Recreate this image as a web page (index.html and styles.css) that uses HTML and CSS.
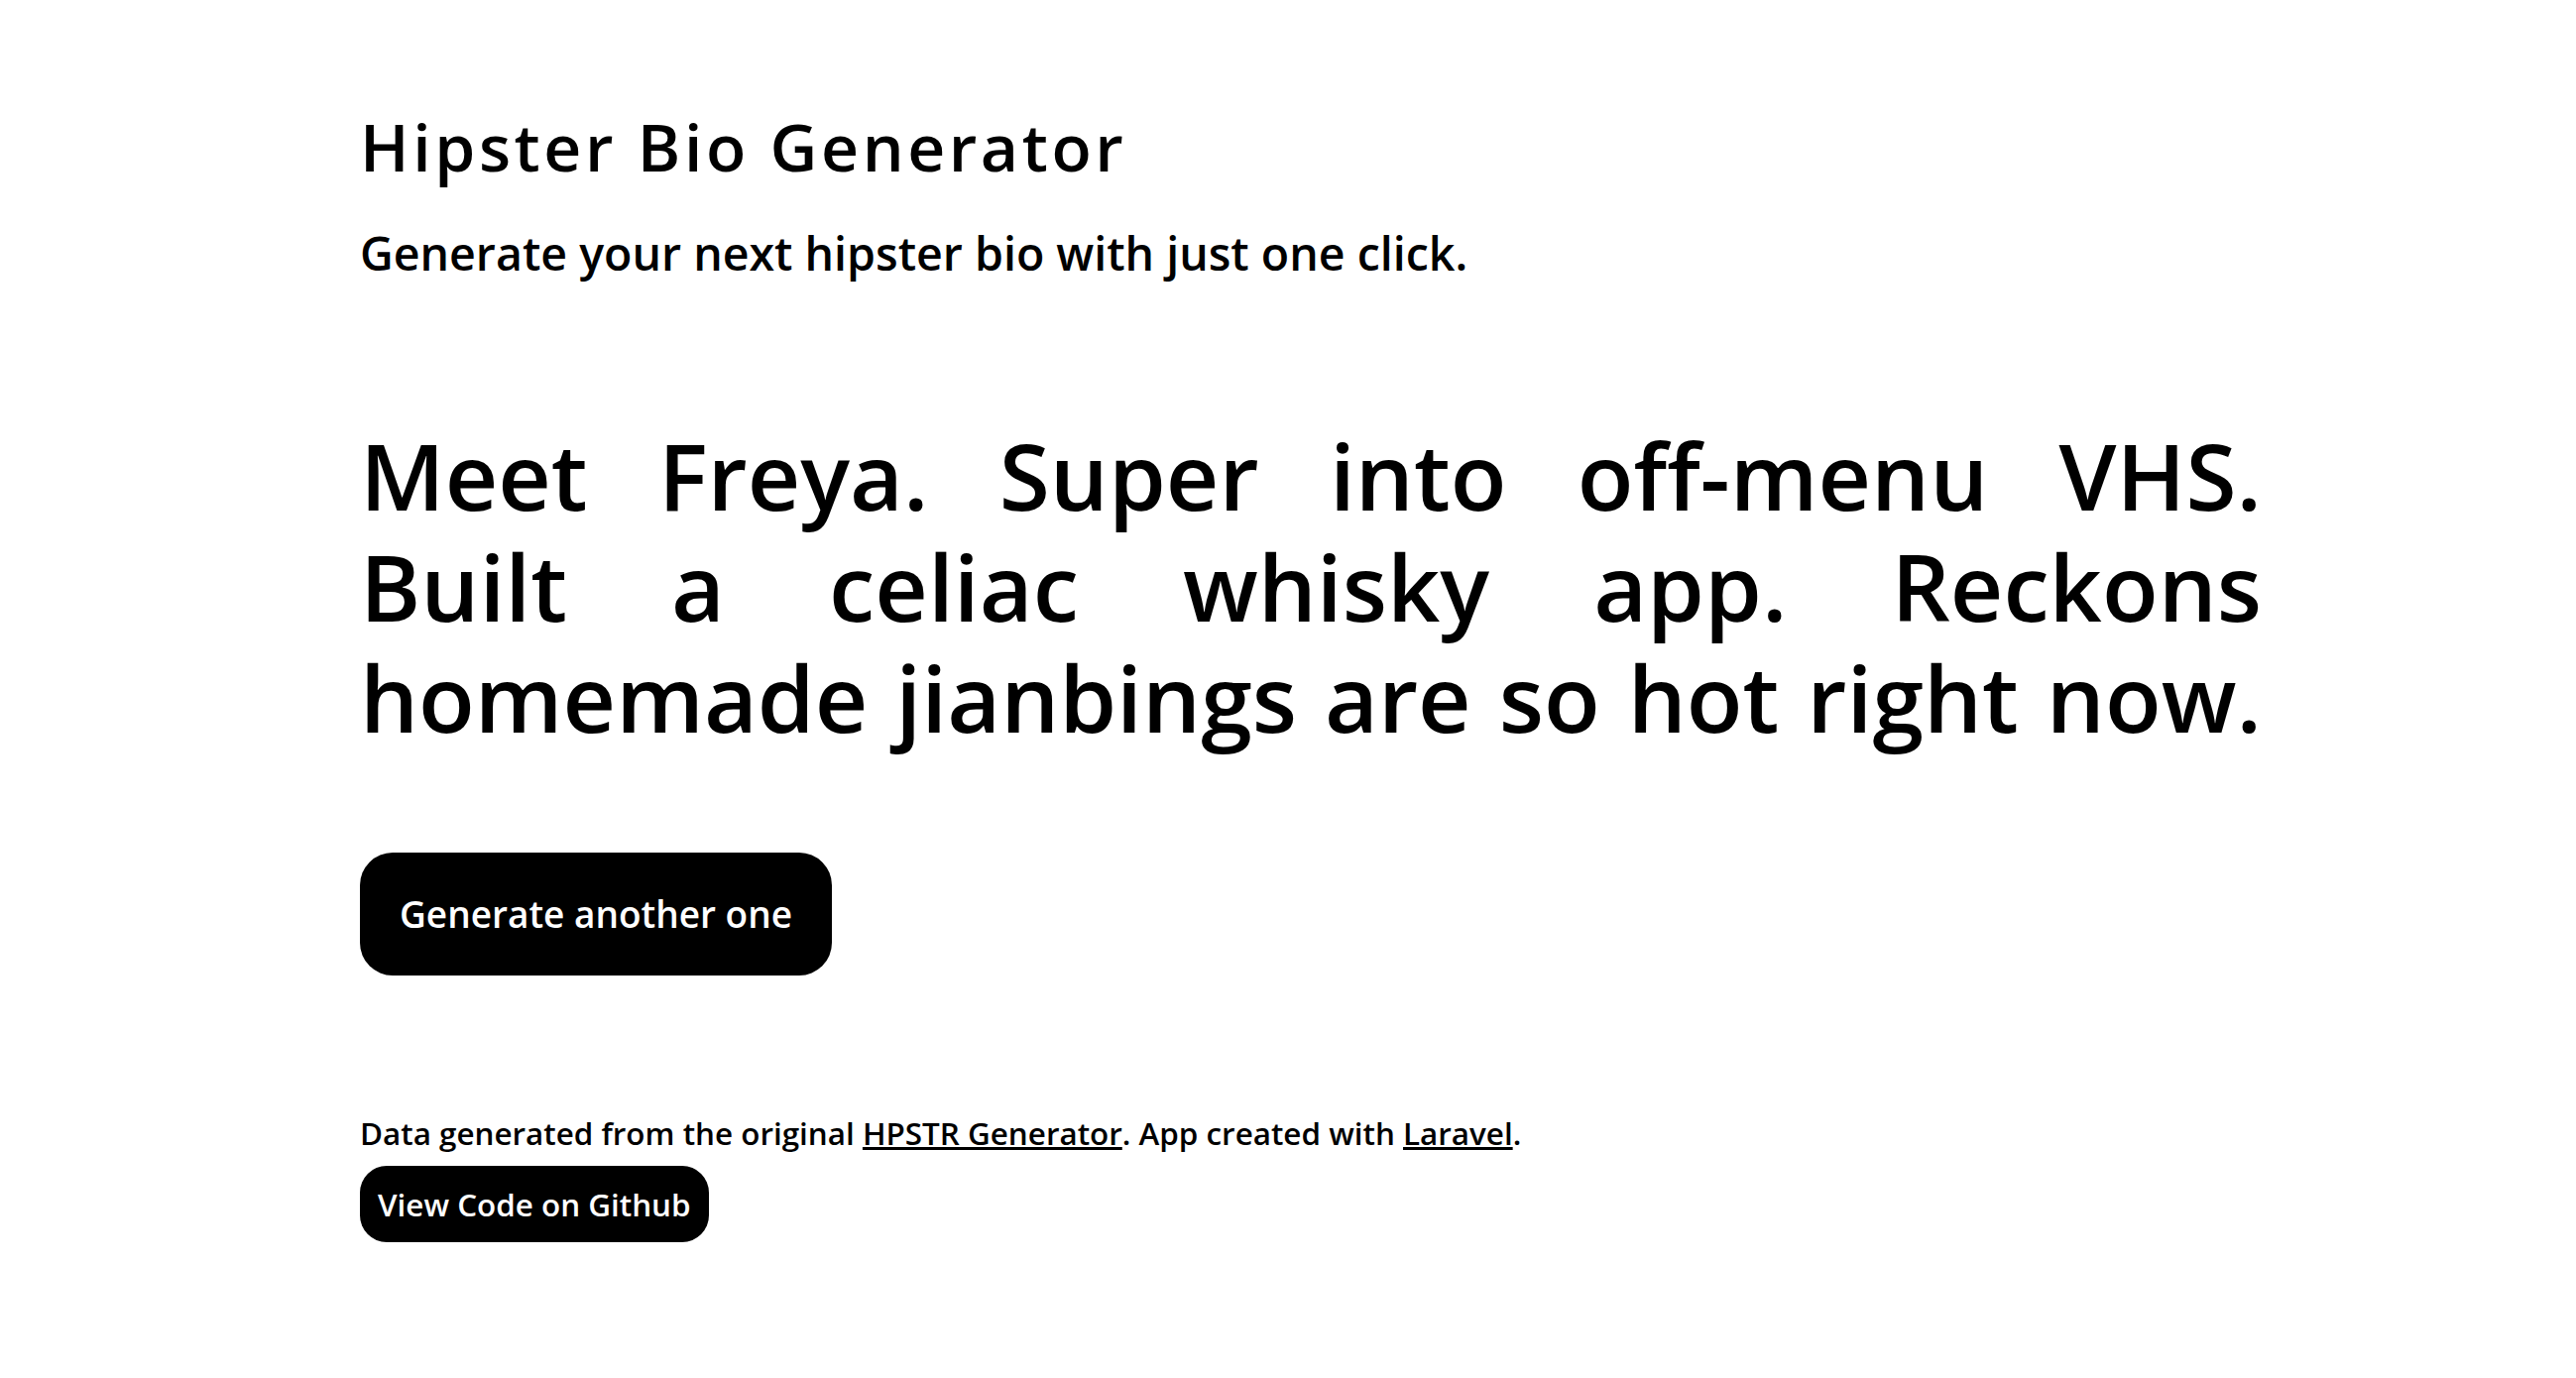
FILE: index.html
```html
<!DOCTYPE html>
<html lang="en">
<head>
<meta charset="utf-8">
<title>Hipster Bio Generator</title>
<link rel="stylesheet" href="styles.css">
</head>
<body>
<main class="page">
  <header class="intro">
    <h1 class="title">Hipster Bio Generator</h1>
    <p class="tagline">Generate your next hipster bio with just one click.</p>
  </header>
  <p class="bio">Meet Freya. Super into off-menu VHS. Built&nbsp;a celiac whisky app. Reckons homemade jianbings are so hot right now.</p>
  <a class="btn btn-main" href="#">Generate another one</a>
  <footer class="footer">
    <p class="credits">Data generated from the original <a href="#">HPSTR Generator</a>. App created with <a href="#">Laravel</a>.</p>
    <a class="btn btn-small" href="#">View Code on Github</a>
  </footer>
</main>
</body>
</html>
```
FILE: styles.css
```css
html, body {
  margin: 0;
  padding: 0;
  background: #fff;
  color: #000;
  font-family: "Open Sans", "Noto Sans", sans-serif;
  font-weight: 600;
}

.page {
  width: 1920px;
  padding: 107px 0 0 363px;
  display: flex;
  flex-direction: column;
  align-items: flex-start;
}

.intro {
  display: flex;
  flex-direction: column;
}

.title {
  margin: 0;
  font-size: 66px;
  line-height: 80px;
  font-weight: 600;
  letter-spacing: 3.6px;
}

.tagline {
  margin: 38px 0 0;
  font-size: 46.5px;
  line-height: 60px;
}

.bio {
  margin: 138px 0 0;
  width: 1918px;
  font-size: 93px;
  line-height: 112px;
  text-align: justify;
  text-align-last: justify;
}

.btn {
  display: inline-block;
  background: #000;
  color: #fff;
  text-decoration: none;
}

.btn-main {
  margin-top: 101px;
  padding: 0 40px;
  height: 124px;
  line-height: 124px;
  font-size: 37px;
  border-radius: 33px;
}

.footer {
  margin-top: 139px;
  display: flex;
  flex-direction: column;
  align-items: flex-start;
}

.credits {
  margin: 0;
  font-size: 31.4px;
  line-height: 40px;
}

.credits a {
  color: #000;
  text-decoration: underline;
}

.btn-small {
  margin-top: 13px;
  padding: 0 18px;
  height: 77px;
  line-height: 77px;
  font-size: 31.4px;
  border-radius: 27px;
}
```
